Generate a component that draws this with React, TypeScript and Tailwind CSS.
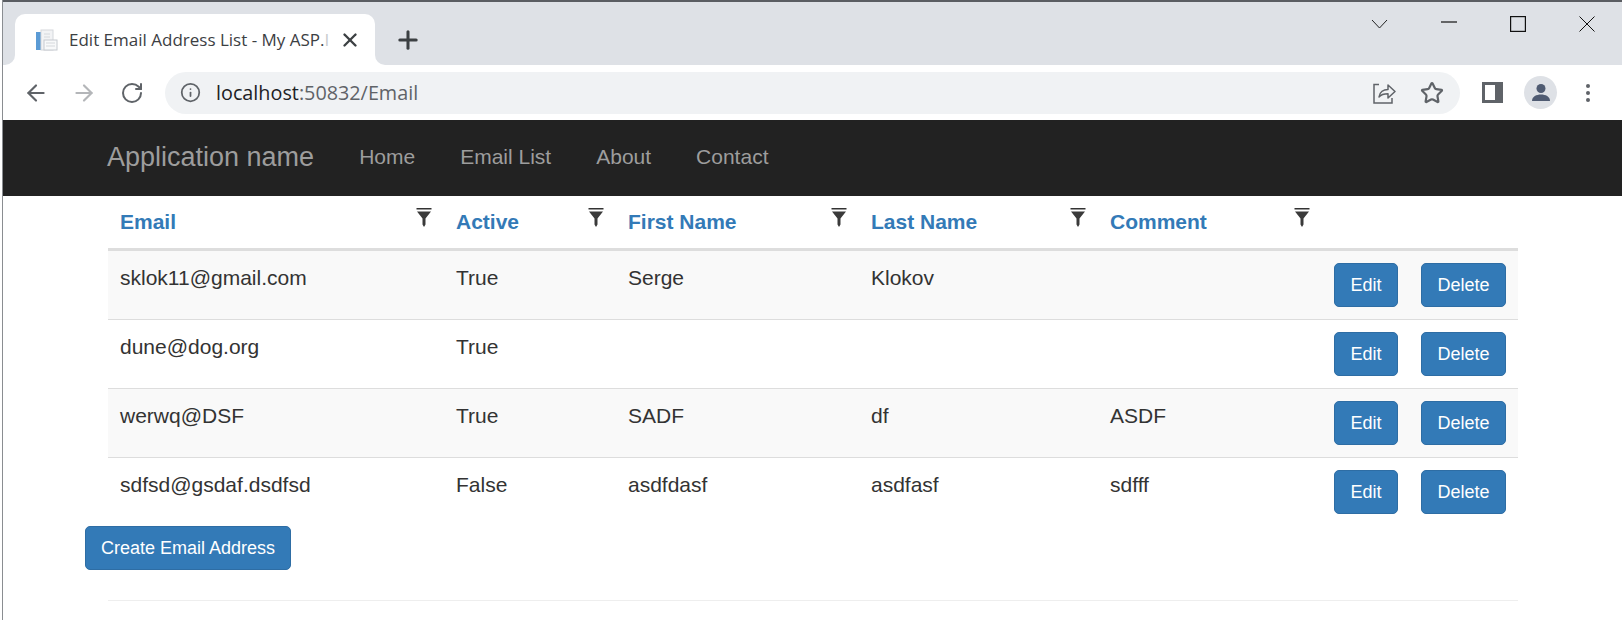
import { ArrowLeft, ArrowRight, Info, Plus, RotateCw, Star, X } from 'lucide-react';

interface EmailRow {
  email: string;
  active: string;
  firstName: string;
  lastName: string;
  comment: string;
}

const rows: EmailRow[] = [
  { email: 'sklok11@gmail.com', active: 'True', firstName: 'Serge', lastName: 'Klokov', comment: '' },
  { email: 'dune@dog.org', active: 'True', firstName: '', lastName: '', comment: '' },
  { email: 'werwq@DSF', active: 'True', firstName: 'SADF', lastName: 'df', comment: 'ASDF' },
  { email: 'sdfsd@gsdaf.dsdfsd', active: 'False', firstName: 'asdfdasf', lastName: 'asdfasf', comment: 'sdfff' },
];

const columns = ['Email', 'Active', 'First Name', 'Last Name', 'Comment'];
const navLinks = ['Home', 'Email List', 'About', 'Contact'];

function FilterIcon() {
  return (
    <svg width="16" height="19" viewBox="0 0 16 19" className="shrink-0 -mt-[1px]">
      <rect x="0.5" y="0" width="15" height="1.500" fill="#333" />
      <path d="M1 3.500h14l-5.500 7v6l-1.500 2.500-1.500-2.500v-6z" fill="#3a3a3a" />
    </svg>
  );
}

function Favicon() {
  return (
    <svg width="24" height="24" viewBox="0 0 24 24" className="shrink-0">
      <rect x="2" y="4" width="5" height="18" fill="#5b9bd5" />
      <rect x="7" y="2" width="12" height="20" fill="#f2f3f5" stroke="#d5d8dc" />
      <rect x="10" y="12" width="13" height="10" fill="#f8f9fa" stroke="#c6cad0" />
      <path d="M12 15h9M12 18h9M10 6h6M10 9h6" stroke="#d5d8dc" />
    </svg>
  );
}

function ShareIcon() {
  return (
    <svg width="24" height="24" viewBox="0 0 24 24" fill="none" stroke="#5f6368" strokeWidth="1.5">
      <path d="M7 3.500H2v18.500h18v-5" />
      <path d="M7 16c.6-5 4.500-7.500 9-7.500V4l7 6.500-7 6.500v-4.200c-4 0-7 .8-9 3.200z" strokeLinejoin="round" />
    </svg>
  );
}

function WindowControls() {
  return (
    <div className="absolute top-[14px] right-[27px] flex items-center gap-[53px]">
      <svg width="17" height="16" viewBox="0 0 17 16" fill="none" stroke="#222" strokeWidth="1">
        <path d="M1 4l7.500 8L16 4" />
      </svg>
      <svg width="16" height="16" viewBox="0 0 16 16" fill="none" stroke="#111" strokeWidth="1.2">
        <path d="M0 6h16" />
      </svg>
      <svg width="16" height="16" viewBox="0 0 16 16" fill="none" stroke="#111" strokeWidth="1.2">
        <rect x="0.6" y="0.6" width="14.800" height="14.800" />
      </svg>
      <svg width="16" height="16" viewBox="0 0 16 16" fill="none" stroke="#111" strokeWidth="1">
        <path d="M0.500 0.500l15 15M15.500 0.500l-15 15" />
      </svg>
    </div>
  );
}

function ActionButton({ label }: { label: string }) {
  return (
    <button className="h-[44px] px-[15.500px] bg-[#337ab7] border border-[#2e6da4] rounded-[5px] text-white text-[18px] leading-none">
      {label}
    </button>
  );
}

function BrowserChrome() {
  return (
    <div className="font-['Open_Sans',sans-serif]">
      {/* Tab strip */}
      <div className="h-[65px] bg-[#dee1e6] border-t-2 border-[#5a5d62] flex items-end pl-[12px] relative">
        <div className="relative w-[360px] h-[51px] bg-white rounded-t-[10px] flex items-center pl-[19px] pr-[14px]">
          <Favicon />
          <span className="ml-[11px] whitespace-nowrap text-[17px] text-[#3c4043]">
            Edit Email Address List - My ASP.<span className="text-[#c8cacd]">I</span>
          </span>
          <X size={22} strokeWidth={2.6} className="ml-auto text-[#3c4043]" />
          <div className="absolute -left-[10px] bottom-0 w-[10px] h-[10px] bg-white">
            <div className="w-full h-full bg-[#dee1e6] rounded-br-[10px]" />
          </div>
          <div className="absolute -right-[10px] bottom-0 w-[10px] h-[10px] bg-white">
            <div className="w-full h-full bg-[#dee1e6] rounded-bl-[10px]" />
          </div>
        </div>
        <Plus size={28} strokeWidth={2.6} className="ml-[19px] mb-[11px] text-[#3c4043]" />
        <WindowControls />
      </div>

      {/* Toolbar */}
      <div className="h-[55px] bg-white flex items-center pl-[20px]">
        <ArrowLeft size={26} strokeWidth={2} className="text-[#5f6368]" />
        <ArrowRight size={26} strokeWidth={2} className="ml-[22px] text-[#b4b6b9]" />
        <RotateCw size={24} strokeWidth={2} className="ml-[23px] text-[#5f6368]" />
        <div className="ml-[21px] w-[1295px] h-[42px] rounded-full bg-[#f0f2f4] flex items-center pl-[15px] pr-[16px]">
          <Info size={21} strokeWidth={2} className="text-[#5f6368]" />
          <span className="ml-[15px] text-[19.800px] text-[#202124]">
            localhost<span className="text-[#5f6368]">:50832/Email</span>
          </span>
          <div className="ml-auto flex items-center gap-[24px]">
            <ShareIcon />
            <Star size={24} strokeWidth={2.2} className="text-[#5f6368]" />
          </div>
        </div>
        <div className="ml-[22px] w-[21px] h-[21px] border-[3px] border-r-[8px] border-[#5f6368] bg-white" />
        <div className="ml-[21px] w-[33px] h-[33px] rounded-full bg-[#dee1e6] flex items-center justify-center">
          <svg width="20" height="20" viewBox="0 0 20 20" fill="#4f5b72">
            <circle cx="10" cy="5.500" r="4.500" />
            <path d="M1 18c0-4.500 4.500-6.500 9-6.500s9 2 9 6.500z" />
          </svg>
        </div>
        <div className="ml-[29px] flex flex-col gap-[3px]">
          <span className="w-[4px] h-[4px] rounded-full bg-[#5f6368]" />
          <span className="w-[4px] h-[4px] rounded-full bg-[#5f6368]" />
          <span className="w-[4px] h-[4px] rounded-full bg-[#5f6368]" />
        </div>
      </div>
    </div>
  );
}

export default function App() {
  return (
    <div className="w-[1622px] h-[620px] flex overflow-hidden bg-white font-['Liberation_Sans',Arial,sans-serif] text-[21px] text-[#333]">
      <div className="w-[3px] shrink-0 bg-white border-r border-[#8a8d91]" />
      <div className="flex-1 min-w-0">
        <BrowserChrome />

        {/* Navbar */}
        <nav className="h-[76px] pb-[2px] bg-[#222] flex items-center pl-[104px] text-[#9d9d9d]">
          <span className="text-[27px] mr-[45px]">Application name</span>
          <div className="flex gap-[45px]">
            {navLinks.map((link) => (
              <span key={link}>{link}</span>
            ))}
          </div>
        </nav>

        <div className="w-[1410px] ml-[105px]">
          <table className="w-full table-fixed border-collapse">
            <colgroup>
              <col className="w-[336px]" />
              <col className="w-[172px]" />
              <col className="w-[243px]" />
              <col className="w-[239px]" />
              <col className="w-[224px]" />
              <col />
            </colgroup>
            <thead>
              <tr className="h-[53px] border-b-[3px] border-[#ddd]">
                {columns.map((col) => (
                  <th key={col} className="px-[12px] align-middle font-bold text-left text-[#337ab7]">
                    <div className="flex items-start justify-between">
                      <span className="leading-[26px]">{col}</span>
                      <FilterIcon />
                    </div>
                  </th>
                ))}
                <th />
              </tr>
            </thead>
            <tbody>
              {rows.map((row, i) => (
                <tr key={row.email} className={`border-b border-[#ddd] last:border-b-0 ${i % 2 === 0 ? 'bg-[#f9f9f9]' : 'bg-white'}`}>
                  <td className="px-[12px] pt-[12px] align-top leading-[30px]">{row.email}</td>
                  <td className="px-[12px] pt-[12px] align-top leading-[30px]">{row.active}</td>
                  <td className="px-[12px] pt-[12px] align-top leading-[30px]">{row.firstName}</td>
                  <td className="px-[12px] pt-[12px] align-top leading-[30px]">{row.lastName}</td>
                  <td className="px-[12px] pt-[12px] align-top leading-[30px]">{row.comment}</td>
                  <td className="px-[12px] py-[12px] align-top">
                    <div className="flex justify-between">
                      <ActionButton label="Edit" />
                      <ActionButton label="Delete" />
                    </div>
                  </td>
                </tr>
              ))}
            </tbody>
          </table>

          <button className="-ml-[23px] block h-[44px] px-[15px] bg-[#337ab7] border border-[#2e6da4] rounded-[5px] text-white text-[18px] leading-none">
            Create Email Address
          </button>
          <hr className="mt-[30px] border-[#eee]" />
        </div>
      </div>
    </div>
  );
}
